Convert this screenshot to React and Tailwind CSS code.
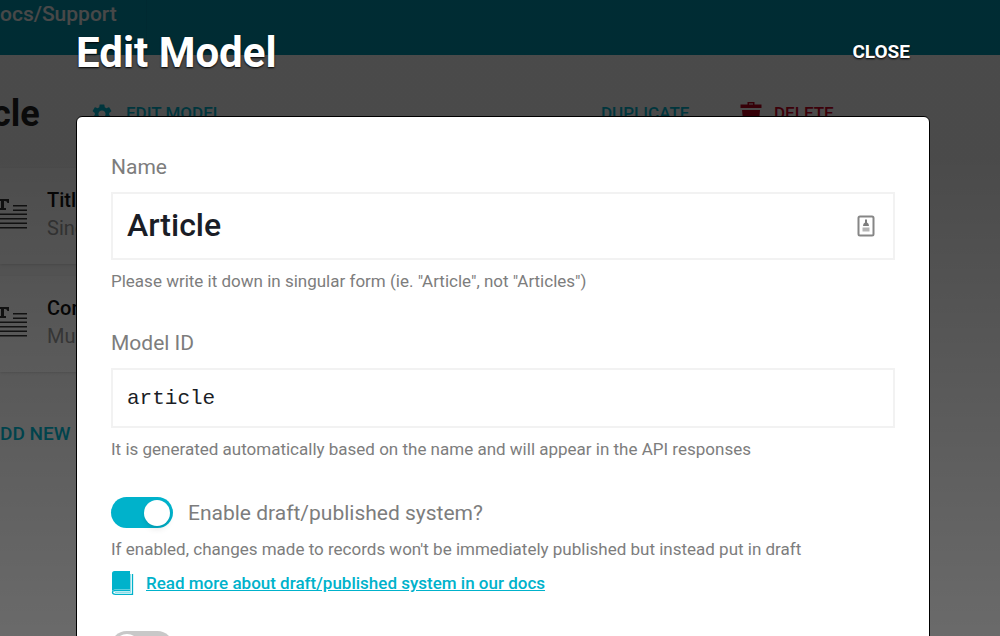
import { useState } from "react";
import { MdSettings } from "react-icons/md";

function TextIcon() {
  return (
    <svg width="27" height="30" viewBox="0 0 27 30" fill="#333" aria-hidden="true">
      <path d="M-8 0H9V4H7.500Q7 2 5 2H4V9H6V11H-1V9H1V2H-8Z" />
      <path d="M13 6h14v1.500H13zM13 10.500h14V12H13zM-8 14.500h35V16H-8zM-8 19h35v1.500H-8zM-8 23.500h35V25H-8zM-8 28h35v1.500H-8z" />
    </svg>
  );
}

function TrashIcon() {
  return (
    <svg width="22" height="24" viewBox="0 0 22 24" fill="#b3001b" aria-hidden="true">
      <path fillRule="evenodd" d="M7.500 2.500V0h7v2.500H21.500V6H.5V2.500zM9 2.500h4v-1H9z" />
      <path d="M2 8h18l-1.500 16H3.500z" />
    </svg>
  );
}

function BookIcon() {
  return (
    <svg width="23" height="24" viewBox="0 0 23 24" aria-hidden="true">
      <path d="M3.500 0H19v18.500H4.500Q1 18.500 1 21V2.500Q1 0 3.500 0z" fill="#00b2cb" />
      <path d="M19.500 19.500H4.500Q1.500 19.500 1.500 21.300Q1.500 23.300 4.500 23.300H21.500V3" fill="none" stroke="#00b2cb" strokeWidth="1.300" />
      <path d="M4 21.500h15.500V3" fill="none" stroke="#8fdde8" strokeWidth="1" />
    </svg>
  );
}

function AutofillIcon() {
  return (
    <svg width="18" height="22" viewBox="0 0 18 22" aria-hidden="true">
      <rect x="1.500" y="1.500" width="15" height="19" rx="1.500" fill="#fff" stroke="#868686" strokeWidth="2" />
      <path d="M8 4.500h2v3q2 .6 2 3.500H6q0-2.900 2-3.500z" fill="#7d7d7d" />
      <path d="M5.500 12.500h7v4h-7z" fill="#b5b5b5" />
    </svg>
  );
}

const fields = [
  { title: "Title", type: "Single" },
  { title: "Content", type: "Multi" },
];

function ModelPage() {
  return (
    <div className="h-full overflow-hidden bg-[#f7f7f7]">
      <header className="flex h-[55px] bg-[#0091ab]">
        <a href="#docs" className="w-[147px] border-r border-[#008aa3] text-[21px] leading-7 font-medium text-[#f0f0f0]">
          ocs/Support
        </a>
      </header>
      <div className="flex h-[113px] items-center pt-1">
        <h1 className="-ml-2 w-[98px] text-[36px] font-bold text-[#222]">cle</h1>
        <button className="flex w-[511px] items-center gap-3 text-[17px] font-medium text-[#00b2cb]">
          <MdSettings size={24} />
          EDIT MODEL
        </button>
        <button className="w-[139px] text-left text-[17px] font-medium text-[#00b2cb]">DUPLICATE</button>
        <button className="flex items-center gap-3 text-[17px] font-medium text-[#c8001e]">
          <TrashIcon />
          DELETE
        </button>
      </div>
      <div className="flex w-4/5 flex-col gap-3">
        {fields.map((field) => (
          <div key={field.title} className="flex h-24 items-center gap-5 bg-[#fdfdfd] pb-1 shadow">
            <TextIcon />
            <div className="text-[20px] leading-7">
              <p className="font-medium text-[#111]">{field.title}</p>
              <p className="text-[#999]">{field.type}</p>
            </div>
          </div>
        ))}
      </div>
      <button className="mt-12 text-[19px] font-medium text-[#00b2cb]">DD NEW</button>
    </div>
  );
}

function Switch({ id, label, checked, onChange }) {
  return (
    <input
      id={id}
      type="checkbox"
      role="switch"
      aria-label={label}
      checked={checked}
      onChange={(e) => onChange(e.target.checked)}
      className="flex h-[31px] w-[62px] shrink-0 appearance-none items-center rounded-full bg-[#c8c8c8] px-[3px] before:size-[26px] before:rounded-full before:bg-white before:shadow-md checked:justify-end checked:bg-[#00b2cb]"
    />
  );
}

export default function App() {
  const [name, setName] = useState("Article");
  const [modelId, setModelId] = useState("article");
  const [draft, setDraft] = useState(true);
  const [sortable, setSortable] = useState(false);

  return (
    <div className="relative h-screen overflow-hidden font-['Roboto',sans-serif]">
      <ModelPage />
      <div className="absolute inset-0 overflow-hidden bg-linear-to-b from-black/70 from-25% to-black/57 pr-[70px] pl-[76px]">
        <div className="flex h-[116px] items-center justify-between pr-5 pb-3">
          <h2 className="text-[42px] font-bold text-white text-shadow-[0_1px_2px_#000]">Edit Model</h2>
          <button className="text-[19px] font-bold text-white text-shadow-[0_1px_2px_#000]">CLOSE</button>
        </div>
        <form className="rounded-md border border-black bg-white px-[34px] pt-9 pb-20 text-[#7d7d7d]">
          <label htmlFor="name" className="block text-[21px] leading-7">Name</label>
          <div className="relative mt-[11px]">
            <input
              id="name"
              value={name}
              onChange={(e) => setName(e.target.value)}
              className="block h-[68px] w-full border-2 border-[#f2f2f2] px-3.5 pb-0.5 text-[32px] font-medium text-[#1a1d26] outline-none"
            />
            <span className="absolute inset-y-0 right-5 flex items-center">
              <AutofillIcon />
            </span>
          </div>
          <p className="mt-[7px] text-[17px] leading-7">
            Please write it down in singular form (ie. "Article", not "Articles")
          </p>

          <label htmlFor="model-id" className="mt-[34px] block text-[21px] leading-7">Model ID</label>
          <input
            id="model-id"
            value={modelId}
            onChange={(e) => setModelId(e.target.value)}
            className="mt-[11px] block h-[60px] w-full border-2 border-[#f2f2f2] px-3.5 font-['Liberation_Mono',monospace] text-[21px] text-[#1a1d26] outline-none"
          />
          <p className="mt-[7px] text-[17px] leading-7">
            It is generated automatically based on the name and will appear in the API responses
          </p>

          <div className="mt-[34px] flex items-center gap-[15px]">
            <Switch id="draft" checked={draft} onChange={setDraft} />
            <label htmlFor="draft" className="text-[21px] leading-7">Enable draft/published system?</label>
          </div>
          <p className="mt-[7px] text-[17px] leading-7">
            If enabled, changes made to records won't be immediately published but instead put in draft
          </p>
          <div className="mt-2 flex items-center gap-3">
            <BookIcon />
            <a href="#draft-docs" className="text-[17px] leading-6 font-medium text-[#00b2cb] underline">
              Read more about draft/published system in our docs
            </a>
          </div>

          <div className="mt-9 flex items-center">
            <Switch id="sortable" label="Enable custom sorting" checked={sortable} onChange={setSortable} />
          </div>
        </form>
      </div>
    </div>
  );
}
